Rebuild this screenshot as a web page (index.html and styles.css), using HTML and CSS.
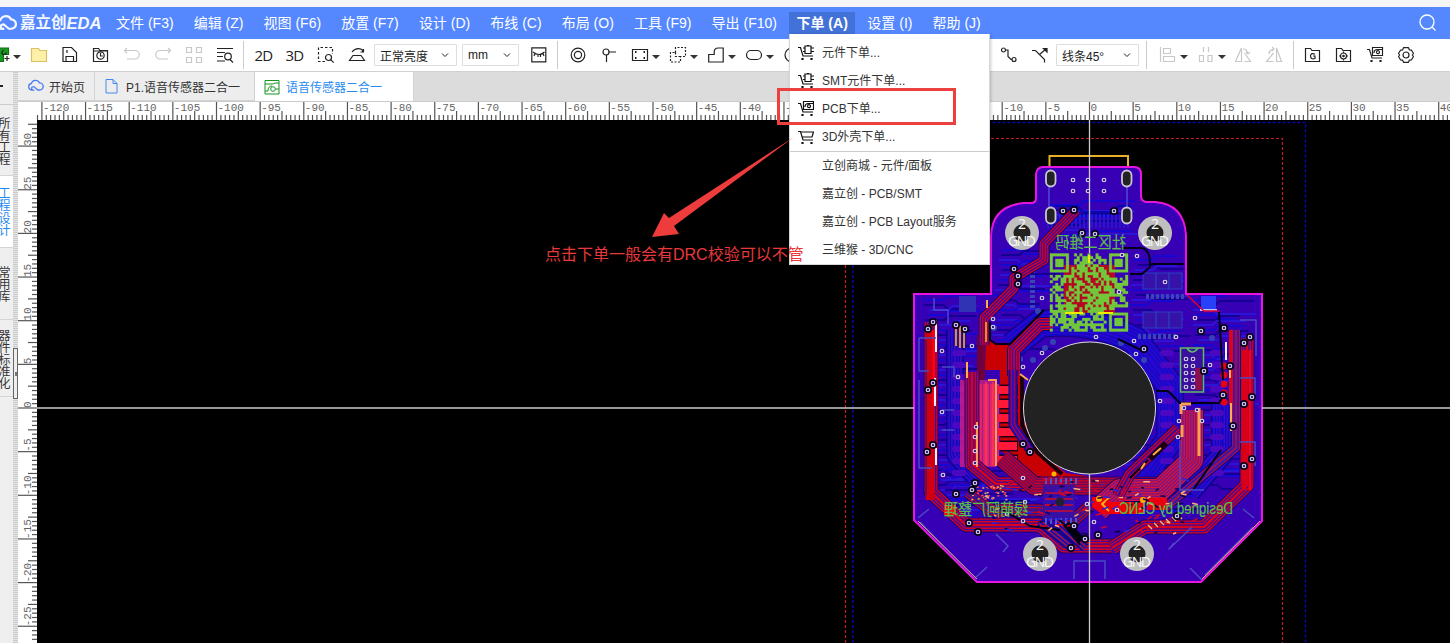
FILE: index.html
```html
<!DOCTYPE html>
<html lang="zh-CN">
<head>
<meta charset="utf-8">
<title>嘉立创EDA</title>
<link rel="stylesheet" href="styles.css">
</head>
<body>
<svg class="defs" width="0" height="0">
  <defs>
    <g id="cart"><path d="M0 2.500h2.500L5 11h10M4 13.500h1v1h-1zM13 13.500h1v1h-1z"/></g>
    <g id="chipcart"><use href="#cart"/><path d="M7 1h6v7.500H7zM9 0h2M5 3h2M5 6.500h2M13 3h3M13 6.500h3"/></g>
    <g id="pcbcart"><use href="#cart"/><path d="M5.500.500h10v8h-10zM7 6q0-3.500 3.500-3.500H15M12.500 5.200a1.500 1.500 0 1 1-3 0 1.500 1.500 0 1 1 3 0"/></g>
    <g id="folderline"><path d="M.5 1.500h5l1.500 2h7.500v11h-14z"/></g>
    <g id="cloud"><path d="M5 12.500H4.200a3.700 3.700 0 0 1-.5-7.300A5 5 0 0 1 13 4.500a4 4 0 0 1 .2 8H11L7.500 9.500a1.900 1.900 0 1 0-.5 2.800"/></g>
  </defs>
</svg>
<div class="app">
  <div class="strip"></div>
  <header class="menubar">
    <div class="brand"><svg class="brand-cloud" viewBox="0 0 18 16"><use href="#cloud"/></svg><span class="brand-cn">嘉立创</span><span class="brand-en">EDA</span></div>
    <nav class="menus">
      <span>文件 (F3)</span><span>编辑 (Z)</span><span>视图 (F6)</span><span>放置 (F7)</span><span>设计 (D)</span><span>布线 (C)</span><span>布局 (O)</span><span>工具 (F9)</span><span>导出 (F10)</span><span class="open">下单 (A)</span><span>设置 (I)</span><span>帮助 (J)</span>
    </nav>
    <svg class="search" viewBox="0 0 18 18"><circle cx="8" cy="8" r="7"/><path d="M13 13l3.500 3.500"/></svg>
  </header>
  <div class="toolbar">
    <div class="tool pair first"><svg viewBox="0 0 16 16"><path class="green" d="M0 1h15.500v6.500h-5v7H0z"/><path d="M11 3.500a2 2 0 1 0 2 2M14 9v5M11.500 11.500h5"/></svg><i class="caret"></i></div>
    <div class="tool"><svg viewBox="0 0 16 16"><path class="yellow" d="M.5 1.500h7l1.500 2h6.500v11h-15z"/></svg></div>
    <div class="tool"><svg viewBox="0 0 16 16"><path d="M1 .500h8.500l5 5v9h-13.500zM4 14.500v-5h7.500v5M5 3v3"/></svg></div>
    <div class="tool"><svg viewBox="0 0 16 16"><path d="M.5 1.500h5l1.500 2h7.500v11h-14zM.5 4h14"/><circle cx="7.500" cy="8.500" r="3.700"/><path d="M7.500 6v3h2.300"/></svg></div>
    <div class="tool dim"><svg viewBox="0 0 16 16"><path d="M3 1L.5 3.500 3 6M1 3.500h10a4 4 0 0 1 0 8.500H3"/></svg></div>
    <div class="tool dim"><svg viewBox="0 0 16 16"><path d="M13 1l2.500 2.500L13 6M15 3.500H5A4 4 0 0 0 5 12h8"/></svg></div>
    <div class="tool dim"><svg viewBox="0 0 16 16"><path d="M.5.500h5v5h-5zM10.500.500h5v5h-5zM.5 10.500h5v5h-5zM10.500 10.500h5v5h-5z"/></svg></div>
    <div class="tool"><svg viewBox="0 0 16 16"><path d="M0 1.500h16M0 5.500h8M0 9.500h6M0 14h8M13 12.500l3 3"/><circle cx="11" cy="9.500" r="3.300"/></svg></div>
    <i class="sep"></i>
    <div class="tool word">2D</div>
    <div class="tool word">3D</div>
    <div class="tool"><svg viewBox="0 0 16 16"><path stroke-dasharray="2.500 2" d="M7 14.500H.500V.500h14V7"/><circle cx="10.500" cy="10.500" r="3"/><path d="M12.700 12.700l3 3"/></svg></div>
    <div class="tool"><svg viewBox="0 0 16 16"><path d="M4 8.500h8l3.500 5H.500zM3 5q4-5 10-2.500l1 2.500M14.500 2v3h-3"/></svg></div>
    <div class="select wide">正常亮度<svg viewBox="0 0 8 5"><path d="M1 .500l3 3 3-3"/></svg></div>
    <div class="select">mm<svg viewBox="0 0 8 5"><path d="M1 .500l3 3 3-3"/></svg></div>
    <div class="tool"><svg viewBox="0 0 16 16"><path d="M.8.800h14v14h-14z"/><path d="M2 5q6 5 11.500 0M4 6.500L3 9M7 7.500V10M9.500 7.500V10M12 6.500l1 2.500"/></svg></div>
    <i class="sep"></i>
    <div class="tool"><svg viewBox="0 0 16 16"><circle cx="8" cy="8" r="6.800"/><circle cx="8" cy="8" r="3.600"/></svg></div>
    <div class="tool"><svg viewBox="0 0 16 16"><circle cx="5" cy="5" r="3"/><path d="M8 5h7M5.500 8v7"/></svg></div>
    <div class="tool pair"><svg viewBox="0 0 16 16"><path d="M.5 2.500h15v11H.500z"/><path d="M3 5h1.500M11.500 5H13M3 11h1.500M11.500 11H13" stroke-width="2"/></svg><i class="caret"></i></div>
    <div class="tool pair"><svg viewBox="0 0 16 16"><path stroke-dasharray="2 1.500" d="M5.500 5.500v-5h10v9h-5v5.500H.500v-9.500zM5.500 5.500v4h5"/></svg><i class="caret"></i></div>
    <div class="tool pair"><svg viewBox="0 0 16 16"><path d="M.7 15V7.500h5.500V5q0-4 4-4h5v14z"/></svg><i class="caret"></i></div>
    <div class="tool pair"><svg viewBox="0 0 16 16"><rect x=".5" y="3.500" width="15" height="9" rx="4.500"/></svg><i class="caret"></i></div>
    <div class="tool"><svg viewBox="0 0 16 16"><circle cx="8" cy="8" r="7"/></svg></div>
    <i class="spring"></i>
    <div class="tool"><svg viewBox="0 0 16 16"><circle cx="2.500" cy="3" r="2"/><circle cx="13" cy="12.500" r="2"/><path d="M4.500 3H7v6.500l3 3h1"/></svg></div>
    <div class="tool"><svg viewBox="0 0 16 16"><path d="M0 3.500h3.500l9 9v3M7.500 7.500l7-6"/><path d="M11.500 1.500h3.500v3.500z" fill="currentColor"/></svg></div>
    <div class="select wide">线条45°<svg viewBox="0 0 8 5"><path d="M1 .500l3 3 3-3"/></svg></div>
    <i class="sep late"></i>
    <div class="tool pair dim"><svg viewBox="0 0 16 16"><path d="M.5 0v15M3.500 1.500h7v5h-7zM3.500 9.500h11v5h-11z"/></svg><i class="caret"></i></div>
    <div class="tool pair dim"><svg viewBox="0 0 16 16"><path d="M1.500 8.500h4v6h-4zM10 8.500h4v6h-4zM5.500 0v5M10.500 0v5"/></svg><i class="caret"></i></div>
    <div class="tool dim"><svg viewBox="0 0 16 16"><path d="M6.500 1v13.500H.500zM9.500 6l6 8.500h-6M8 2q4 0 5 5M11 5l2 2 2-2"/></svg></div>
    <div class="tool dim"><svg viewBox="0 0 16 16"><path d="M10.500 1v13.500h5zM7.500 6l-7 8.500h7M3 7q0-4 5-5M6 0l2 2-2 2"/></svg></div>
    <i class="sep"></i>
    <div class="tool"><svg viewBox="0 0 16 16"><use href="#folderline"/><path d="M10 7.300q-4-2-4.500 1.500 0 4 4.500 2.700V9H8"/></svg></div>
    <div class="tool"><svg viewBox="0 0 16 16"><use href="#folderline"/><circle cx="7.500" cy="9" r="3"/><circle cx="7.500" cy="9" r=".7"/><path d="M7.500 4.500V6M7.500 12v1.500M3 9h1.500M10.500 9H12"/></svg></div>
    <div class="tool"><svg viewBox="0 0 16 16"><use href="#pcbcart"/></svg></div>
    <div class="tool"><svg viewBox="0 0 16 16"><path d="M5.500.700h5l.8 2.100 2.200.4 2 3.300L14.300 8l1.200 1.500-2 3.300-2.200.4-.8 2.100h-5l-.8-2.100-2.200-.4-2-3.300L1.700 8 .500 6.500l2-3.300 2.200-.4z" stroke-linejoin="round"/><circle cx="8" cy="8" r="3"/></svg></div>
  </div>
  <div class="work">
    <aside class="side">
      <div class="side-top"></div>
      <div class="vtab t1">所有工程</div>
      <div class="vtab t2 on">工程设计</div>
      <div class="vtab t3">常用库</div>
      <div class="vtab t4">器件标准化</div>
    </aside>
    <div class="grip"><div class="handle"></div></div>
    <main class="main">
      <div class="tabs">
        <div class="tab home"><svg viewBox="0 0 18 16"><use href="#cloud"/></svg>开始页</div>
        <div class="tab sheet"><svg viewBox="0 0 16 16"><path d="M2 1.500h7l4 4v9.500H2zM9 1.500v4h4"/></svg>P1.语音传感器二合一</div>
        <div class="tab pcb"><svg viewBox="0 0 16 16"><path d="M1 1.500h14v13.500H1zM1 5h8l2-1h4M1 12h3q0-5 4-5M11.500 10h3.500"/><circle cx="9" cy="10" r="2.300"/></svg>语音传感器二合一</div>
      </div>
      <svg class="hruler" id="hruler" viewBox="18 101 1432 19"></svg>
      <div class="stage">
        <svg class="vruler" id="vruler" viewBox="18 120 19 523"></svg>
        <svg class="canvas" id="canvas" viewBox="37 120 1413 523">
          <defs><clipPath id="clip"><path d="M914 294H991V236Q992 206 1024 203H1031Q1036 203 1036 198V174Q1037 167 1043 167H1134Q1141 167 1141 174V197Q1142 202 1147 202H1155Q1184 204 1186 235V294H1262V521L1201 582H977L914 520Z"/></clipPath></defs>
          <g class="bounds"><path class="dash-blue" d="M853 643V122.500H1305.500V643"/><path class="dash-red" d="M845.500 643V138.500H1282.500V643"/></g>
          <g id="board" clip-path="url(#clip)"></g>
          <path class="usb" d="M1049.500 168V156H1128V168"/>
          <path class="edge" d="M914 294H991V236Q992 206 1024 203H1031Q1036 203 1036 198V174Q1037 167 1043 167H1134Q1141 167 1141 174V197Q1142 202 1147 202H1155Q1184 204 1186 235V294H1262V521L1201 582H977L914 520Z"/>
          <path class="bevel" d="M918 521L977 579M1202 579L1260 521"/>
          <path class="axis" d="M37 408H914M1262 408H1450M1089.500 120V253M1089.500 474V643"/>
          <circle class="hole" cx="1089.500" cy="408" r="66"/>
          <g id="silk"></g>
        </svg>
      </div>
    </main>
  </div>
</div>
<div class="dropdown">
  <div class="row"><svg viewBox="0 0 16 16"><use href="#chipcart"/></svg>元件下单...</div>
  <div class="row"><svg viewBox="0 0 16 16"><use href="#chipcart"/></svg>SMT元件下单...</div>
  <div class="row"><svg viewBox="0 0 16 16"><use href="#pcbcart"/></svg>PCB下单...</div>
  <div class="row"><svg viewBox="0 0 16 16"><use href="#cart"/><path d="M2.500 3H15.500L14 8H4"/></svg>3D外壳下单...</div>
  <div class="rule"></div>
  <div class="row plain">立创商城 - 元件/面板</div>
  <div class="row plain">嘉立创 - PCB/SMT</div>
  <div class="row plain">嘉立创 - PCB Layout服务</div>
  <div class="row plain">三维猴 - 3D/CNC</div>
</div>
<div class="mark"></div>
<svg class="arrow" viewBox="640 130 160 115"><path d="M794 138L669 219 664 214 652 238 679 235 674 227Z"/></svg>
<div class="note">点击下单一般会有DRC校验可以不管</div>
<script src="app.js"></script>
</body>
</html>
```
FILE: styles.css
```css
* { box-sizing: border-box; }
body { margin: 0; overflow: hidden; font: 12px "Liberation Sans", "Noto Sans CJK SC", sans-serif; color: #333; }
.defs { position: absolute; }
svg { fill: none; stroke: currentColor; flex: none; display: block; }
.app { width: 1450px; height: 643px; display: flex; flex-direction: column; overflow: hidden; }
.strip { height: 7px; background: #f5f5f5; flex: none; }
.menubar { height: 32px; flex: none; background: #5588ff; color: #fff; display: flex; align-items: center; }
.brand { width: 106px; flex: none; display: flex; align-items: center; white-space: nowrap; color: #f5f8ff; }
.brand-cloud { width: 21px; height: 19px; margin-left: -4px; stroke-width: 1.9; }
.brand-cn { font-size: 15.500px; font-weight: 700; margin-left: 3px; line-height: 20px; }
.brand-en { font-size: 16.500px; font-weight: 700; font-style: italic; line-height: 20px; }
.menus { display: flex; font-size: 14px; line-height: 22px; white-space: nowrap; flex: 1; }
.menus span { padding: 0 10.050px; }
.menus .open { background: #4272d7; font-weight: 700; padding: 0 7.500px; margin: 0 2px 0 2px; }
.search { width: 18px; height: 18px; margin-right: 13px; stroke-width: 1.300; }
.toolbar { height: 33px; flex: none; background: #fff; border-bottom: 1px solid #d0d0d0; display: flex; align-items: center; color: #222; }
.tool { width: 31px; flex: none; display: flex; justify-content: center; align-items: center; }
.tool svg { width: 16px; height: 16px; stroke-width: 1.200; overflow: visible; }
.pair { width: 38px; justify-content: flex-start; padding-left: 8px; gap: 4px; }
.pair.first { margin-left: -15px; }
.dim svg { color: #c8c8c8; }
.word { font: 15px "Open Sans", "Noto Sans", sans-serif; letter-spacing: -.8px; }
.caret { border: 4px solid transparent; border-top: 4px solid #333; border-bottom: 0; margin-top: 3px; }
.green { fill: #169b20; stroke: #146b18; }
.yellow { fill: #fff0a8; stroke: #d8c268; }
.sep { width: 1px; height: 28px; background: #ccc; margin: 0 4px 0 3px; flex: none; }
.sep.late { margin-left: 7px; margin-right: 4.500px; }
.spring { width: 186px; flex: none; }
.select { width: 57px; height: 22px; border: 1px solid #ddd; padding: 0 7px 0 5px; margin-right: 4px; flex: none; display: flex; align-items: center; justify-content: space-between; white-space: nowrap; border-radius: 1px; }
.select.wide { width: 83px; margin-left: 2px; margin-right: 5px; }
.spring ~ .select.wide { margin-left: 1px; margin-right: 0; }
.select svg { width: 8px; height: 5px; }
.work { display: flex; flex: 1; min-height: 0; }
.side { width: 13px; flex: none; background: #efefef; overflow: hidden; }
.side-top { height: 33px; border-bottom: 1px solid #ccc; background: linear-gradient(#222, #222) 0 13px / 3px 2px no-repeat #efefef; }
.vtab { width: 16px; margin-left: -3px; padding-right: 4px; border-bottom: 1px solid #d5d5d5; font-size: 12px; line-height: 12px; overflow: hidden; writing-mode: vertical-rl; display: flex; align-items: center; justify-content: flex-start; }
.t1 { height: 71px; padding-top: 12px; }
.t2 { height: 72px; padding-top: 11px; letter-spacing: .5px; }
.t3 { height: 72px; padding-top: 18px; }
.t4 { height: 77px; padding-top: 9px; }
.on { background: #fff; color: #1e88f0; }
.grip { width: 5px; flex: none; background: repeating-linear-gradient(#ccc 0 1px, #e4e4e4 1px 2px); padding-top: 276px; }
.handle { width: 5px; height: 51px; border: 1px solid #666; background: linear-gradient(#777, #777) 1px 23px / 2px 4px no-repeat #eee; }
.main { flex: 1; min-width: 0; display: flex; flex-direction: column; }
.tabs { height: 29px; flex: none; background: #dcdcdc; display: flex; }
.tab { display: flex; align-items: center; white-space: nowrap; background: #ededed; border-right: 1px solid #d2d2d2; border-bottom: 1px solid #d2d2d2; }
.tab svg { width: 16px; height: 16px; }
.home { width: 77px; padding-left: 10px; gap: 5px; }
.home svg { color: #4c7df0; stroke-width: 1.500; }
.sheet { width: 160px; padding-left: 9px; gap: 6px; }
.sheet svg { color: #4488ee; }
.pcb { width: 159px; background: #fff; color: #2a8cf0; padding-left: 9px; gap: 6px; border-bottom: 0; }
.pcb svg { color: #159520; }
.hruler { width: 1432px; height: 19px; background: #fff; }
.stage { flex: 1; display: flex; min-height: 0; }
.vruler { width: 19px; height: 523px; background: #fff; }
.canvas { width: 1413px; height: 523px; background: #000; }
.tick { stroke: #555; stroke-width: 1.200; }
.num { font: 11px "Liberation Mono", monospace; fill: #666; stroke: none; }
.dash-blue { stroke: #0808a8; stroke-width: 1.500; stroke-dasharray: 3 2; }
.dash-red { stroke: #c81a1a; stroke-width: 1.200; stroke-dasharray: 3 2; }
.usb { stroke: #e8b028; stroke-width: 2; }
.edge { stroke: #e815e0; stroke-width: 2; }
.bevel { stroke: #e0a070; stroke-width: 1; }
.axis { stroke: #ccc; stroke-width: 1.300; }
.hole { fill: #222; stroke: #ddd; stroke-width: 1; }
.gnd { font: 14px "Noto Sans", sans-serif; fill: #f6f6f6; stroke: none; text-anchor: middle; }
.silk-text { fill: #58bd4c; stroke: #58bd4c; stroke-width: .2; font-family: "Liberation Sans", "Noto Sans CJK SC", sans-serif; }
.dropdown { position: absolute; left: 789px; top: 34px; width: 201px; height: 231px; background: #fff; border: 1px solid #d6d6d6; border-top: 0; padding-top: 4px; box-shadow: 1px 1px 3px rgba(0,0,0,.2); font-size: 12px; }
.row { height: 28px; display: flex; align-items: center; padding: 0 0 2px 8px; gap: 8px; white-space: nowrap; }
.row svg { width: 16px; height: 16px; color: #111; stroke-width: 1.200; margin-top: 3px; }
.plain { padding-left: 32px; padding-bottom: 3px; }
.rule { height: 1px; background: #ccc; margin-top: 1px; }
.mark { position: absolute; left: 777px; top: 88px; width: 179px; height: 37px; border: 3px solid #ec4040; }
.arrow { position: absolute; left: 640px; top: 129px; width: 160px; height: 115px; fill: #ee3c3c; stroke: none; }
.note { position: absolute; left: 545px; top: 244px; font-size: 16px; line-height: 22px; color: #e9383b; white-space: nowrap; }
```
FILE: app.js
```js
const NS = 'http://www.w3.org/2000/svg';
function add(parent, tag, attrs, text) {
  const el = document.createElementNS(NS, tag);
  for (const k in attrs) el.setAttribute(k, attrs[k]);
  if (text !== undefined) el.textContent = text;
  parent.appendChild(el);
  return el;
}
const STEP = 8.73, OX = 1089.5, OY = 408;
const h = document.getElementById('hruler'), v = document.getElementById('vruler');
add(h, 'path', { d: 'M18 101.500H1450', stroke: '#ccc' });
for (let i = -242; i <= 84; i++) {
  const x = OX + i * STEP / 2;
  if (x < 37) continue;
  const len = i % 10 === 0 ? 18 : i % 5 === 0 ? 9 : 5;
  add(h, 'path', { class: 'tick', d: `M${x} 120v-${len}` });
  if (i % 10 === 0) add(h, 'text', { class: 'num', x: x + 1, y: 111 }, i / 2);
}
for (let i = -66; i <= 54; i++) {
  const y = OY + i * STEP / 2;
  if (y < 121) continue;
  const len = i % 10 === 0 ? 19 : i % 5 === 0 ? 9 : 5;
  add(v, 'path', { class: 'tick', d: `M37 ${y}h-${len}` });
  if (i % 10 === 0) add(v, 'text', { class: 'num', transform: `translate(31 ${y}) rotate(-90)` }, i === 0 ? 0 : -i / 2);
}

const b = document.getElementById('board'), s = document.getElementById('silk');
let seed = 11;
const rnd = () => (seed = (seed * 16807) % 2147483647) / 2147483647;
const line = (d, c, w = 1) => add(b, 'path', { d, stroke: c, 'stroke-width': w, 'stroke-linejoin': 'round' });
const box = (x, y, w, hh, c, o = 1) => add(b, 'rect', { x, y, width: w, height: hh, fill: c, stroke: 'none', opacity: o });
// Nested strokes of shrinking width give a bundle of parallel traces.
function bundle(d, w, a = '#d8001c', g = '#3a0a9c', gap = 2.600) {
  let c = 0;
  line(d, '#180078', w + 2);
  for (let k = w; k > 0; k -= gap) line(d, c++ % 2 ? g : a, k);
}
box(910, 160, 360, 430, '#3800b4');

// Blue layer
[[924, 300, 64, 200], [1190, 300, 66, 190], [992, 250, 62, 100], [1128, 260, 60, 130], [1040, 205, 100, 35], [1120, 440, 90, 80], [940, 470, 110, 50]].forEach(r => {
  for (let i = 0; i < r[3] / 5; i++) {
    const y = r[1] + i * 5, x = r[0] + rnd() * 10;
    line(`M${x} ${y}h${r[2] * .3}l4 ${rnd() > .5 ? 4 : -4}h${r[2] * (.2 + rnd() * .4)}`, ['#1608d0', '#150094', '#2a14d8'][i % 3], 2);
  }
});
bundle('M1012 346L1040 324Q1090 318 1135 340L1170 385V440L1135 485', 26, '#1408c8', '#2c08cc', 3.200);
bundle('M955 330V455L975 478', 16, '#1006b8', '#3a0cc4', 2.800);
bundle('M1222 400V455L1190 492', 20, '#1006c8', '#3a0cc4', 2.800);
for (let i = 0; i < 21; i++) line(`M${1048 + i * 4} 214v14`, '#2020dc', 1.500);
line('M1055 206h22l6 6h30l6-6h12', '#0808b0', 2);
[[1143, 273], [1143, 312]].forEach(p => { for (let k = 0; k < 3; k++) add(b, 'rect', { x: p[0] + k * 13, y: p[1], width: 13, height: 16, fill: '#3712a9', stroke: '#2940bd' }); });
for (let i = 0; i < 8; i++) { box(1146 + i * 5, 294, 3, 5, '#3a46b5'); box(1138 + i * 5, 334, 3, 5, '#3a46b5'); box(1030, 270 + i * 5, 5, 3, '#3a46b5'); }
for (let i = 0; i < 11; i++) for (const x of [952, 1160, 1210]) add(b, 'rect', { x, y: 350 + i * 12, width: 14, height: 6, rx: 3, fill: '#4c08c0', stroke: 'none' });
[[1020,359],[1033,360],[1045,348],[1053,342],[1121,343],[1144,360],[994,328],[1212,338],[1038,311],[1129,357]].forEach(p => add(b, 'circle', { cx: p[0], cy: p[1], r: 3, fill: '#3442b4', stroke: 'none' }));
box(959, 296, 17, 16, '#3033b4'); box(1201, 296, 15, 14, '#2840f8');
line('M1200 310h17', '#eef', 1.500);
line('M1186 294l18 17h15', '#e00030', 1.500);

// Red copper pours and traces
add(b, 'path', { d: 'M986 335L992 343H1010L1013 368 1023 378V420L1040 452 1066 473 1100 478V486H1050L1000 450V370H985Z', fill: '#c80004', stroke: 'none' });
line('M1022 376V425L1037 452 1062 474', '#1c0010', 4);
add(b, 'rect', { x: 977, y: 335, width: 8, height: 45, fill: '#70003c', stroke: 'none' });
box(960, 380, 36, 87, '#c81c8c', .85); box(975, 384, 24, 82, '#f02868', .85);
for (let i = 0; i < 8; i++) line(`M${972 + i * 3.500} 382V466`, i % 2 ? '#a02078' : '#ff3a50', 1.300);
for (let i = 0; i < 6; i++) { line(`M1000 ${390 + i * 14}h18`, '#200018', 11); line(`M998 ${390 + i * 14}h19`, '#ff1838', 8); }
bundle('M1076 210L1044 244V260L1014 278V288L984 318V345', 9);
bundle('M1053 324H1040L1014 350V376', 12);
bundle('M931 322V492L966 525H1040L1064 546H1112', 13);
bundle('M1247 338V485L1204 527H1145L1112 548', 13);
bundle('M972 372V464L996 484H1040', 13);
bundle('M1013 370V425L1030 450', 7, '#2210c8', '#b00030');
bundle('M1002 458L1034 486H1172', 17, '#c00028', '#6a0a60');
bundle('M1192 410V460L1160 490H1120L1098 510', 22, '#d4143c', '#7a1484');
bundle('M1178 428L1130 474L1118 496', 10);
bundle('M1236 330V448L1200 478L1165 508', 8, '#a01050', '#1818c8');
bundle('M1090 506L1074 520L1040 510H990L968 492', 11, '#c00020', '#1818b0');
bundle('M1040 522L1072 548M1056 522L1085 548', 7, '#1010b8', '#c01030');
add(b, 'path', { d: 'M1092 497h14l4 5h34v12h-42l-10-7z', fill: '#f00008', stroke: 'none' });
box(1147, 498, 20, 12, '#e80010');
line('M1231 330V405', '#e00018', 4);
for (let i = 0; i < 5; i++) add(b, 'circle', { cx: 1224, cy: 366 + i * 9, r: 3.500, fill: '#e80010', stroke: 'none' });
line('M1244 350V490', '#d80018', 5); line('M1250 350V490', '#ff0008', 3);
line('M930 330V500', '#d00012', 9); line('M934 330V405', '#ff0010', 3); line('M926 340V495', '#501060', 1.500);
box(944, 505, 12, 10, '#f01010');
box(1043, 485, 32, 35, '#3311aa', .9); line('M1045 493h28M1045 499h28M1045 505h28M1045 511h28', '#a80c48', 2);
for (let i = 0; i < 7; i++) line(`M${1046 + i * 5} 478v6M${1046 + i * 5} 518v6`, '#4d55d5', 2);
add(b, 'circle', { cx: 1060, cy: 502, r: 4.500, fill: '#202038', stroke: 'none' });

// Isolation gaps
['M1118 339L1141 350', 'M1156 391H1168L1180 403H1219L1224 395', 'M1130 274H1142L1150 267Q1151 248 1140 248H1122M1150 264H1184', 'M990 322V340L996 344H1010L1044 310', 'M1060 520L1080 545', 'M1000 508L1030 526 1060 530', 'M1221 450L1193 490', 'M1219 312L1223 380', 'M1130 478L1148 460'].forEach(d => line(d, '#000018', 2));
line('M1066 524L1082 540', '#000010', 7);
line('M1166 443l-16 16', '#1a0010', 6);
line('M936 320V352M936 448V465M1226 342V360M935 378v28', '#f2f2ff', 2);
line('M996 380V466M977 422V467M988 380H997', '#ff9c50', 2);
line('M1181 404H1191M1181 404v10M1182 425v12M1199 408V456', '#ffa050', 3);
line('M956 328v18M960 326v22M964 332v16M986 322v20', '#e8a31c', 1.800);
line('M1230 366v12M1231 403v28M1161 448l-8 7M1145 463l-4 6M967 362v16M987 300v8M1020 374l8 6', '#ffad49', 2);
line('M1109 498l-7 6 7 7', '#ffb020', 2);
add(b, 'circle', { cx: 1099, cy: 499, r: 3, fill: '#ffb000', stroke: 'none' });
add(b, 'circle', { cx: 1143, cy: 500, r: 3, fill: '#ffb000', stroke: 'none' });
add(b, 'circle', { cx: 1054, cy: 474, r: 2.500, fill: '#ffb000', stroke: 'none' });
for (let i = 0; i < 70; i++) box(970 + rnd() * 36, 484 + rnd() * 16, 2, 1.500, ['#e4b45a', '#ff4050', '#1515a0'][i % 3]);
for (let i = 0; i < 130; i++) {
  const x = 985 + rnd() * 210, y = 478 + rnd() * 56;
  line(`M${x} ${y}l${2 + rnd() * 5} ${rnd() * 6 - 3}`, ['#ffb070', '#0c0040', '#e00022', '#2525e0', '#100050', '#d80020'][i % 6], 1.500);
}
for (let i = 0; i < 12; i++) line(`M${1145 + i * 3} ${526 - i}l4 4`, i % 2 ? '#ffb870' : '#c00020', 1.500);
// Bottom silkscreen brackets
line('M919 338h17M919 338v33h10M919 380v88h13M942 367h12v10M942 410h12M942 430h12M918 518l11-9M920 522l54 56M975 578l12-11M996 534l12 12-5 6M1174 543l-5 6 23-22M1190 568l12 12M1254 518l-11-9M1205 575l48-48M1074 579v-18h31v18M1240 320h16v36M1240 378h15v22M1240 442h15v24M1180 440v50h24', '#4a4bc3', 1.500);
line('M1049 176v35M1127 176v35M934 298v12h14v14', '#4b4bd0', 1.500);
add(b, 'rect', { x: 1180.5, y: 348, width: 23, height: 44, fill: '#3a10a0', stroke: '#5fba62', 'stroke-width': 1.500 });
box(1195, 368, 7, 22, '#8a1050');
line('M1187 348q5 8 11 0', '#5fba62', 1.500);

// QR code
box(1064, 265, 51, 48, '#b50720');
const N = 29, M = 78 / N, fx = [[0, 0], [22, 0], [22, 22]];
let qr = '';
for (let y = 0; y < N; y++) for (let x = 0; x < N; x++) {
  let on = rnd() > .42;
  for (const [a, c] of fx) {
    const u = x - a, w = y - c;
    if (u >= -1 && u <= 7 && w >= -1 && w <= 7) {
      const m = Math.max(Math.abs(u - 3), Math.abs(w - 3));
      on = m === 3 || m <= 1;
    }
  }
  if (on) qr += `M${1050 + x * M} ${253.500 + y * M}h${M}v${M}h-${M}z`;
}
add(b, 'path', { d: qr, fill: '#74c83c', stroke: '#74c83c', 'stroke-width': .3 });
line('M1065 313h18M1098 313h15M1089 255v8', '#f2e900', 2);

// Slots, mounting pads, vias
[[1051, 178], [1127, 178], [1051, 215], [1127, 215]].forEach(p => add(s, 'rect', { x: p[0] - 5, y: p[1] - 7.500, width: 9.500, height: 16, rx: 4.700, fill: '#222', stroke: '#c8c4d4', 'stroke-width': 1.800 }));
[[1022, 233], [1155, 233], [1040, 554], [1137, 554]].forEach(p => {
  add(s, 'circle', { cx: p[0], cy: p[1], r: 17, fill: '#bfbfbf', stroke: 'none' });
  add(s, 'circle', { cx: p[0], cy: p[1], r: 8.500, fill: '#222', stroke: 'none' });
  add(s, 'text', { class: 'gnd', x: p[0], y: p[1] - 4 }, '2');
  add(s, 'text', { class: 'gnd', x: p[0], y: p[1] + 13, textLength: 28 }, 'GND');
});
const via = (x, y, dark) => {
  if (dark) add(s, 'circle', { cx: x, cy: y, r: 4, fill: '#080018', stroke: 'none' });
  add(s, 'circle', { cx: x, cy: y, r: 1.800, fill: '#302080', stroke: '#e0d8f0', 'stroke-width': 1.100 });
};
[[1073,180],[1088,180],[1104,180],[1073,191],[1088,191],[1104,191],[1042,298],[993,319],[993,327],[972,346],[942,351],[1042,353],[1023,367],[958,377],[942,412],[943,475],[1023,478],[1023,521],[1165,282],[1137,256],[1122,255],[1195,318],[1176,337],[1134,341],[1136,354],[1096,337],[1210,365],[1160,401],[976,427],[975,437],[975,451],[975,463],[1184,408],[1197,410],[1179,421],[1202,421],[1178,437],[1094,522],[1117,510],[1087,504],[1025,502],[1007,514],[1119,292]].forEach(p => via(p[0], p[1]));
[[1063,211],[1074,210],[1114,211],[1014,269],[1018,276],[1018,284],[933,322],[928,329],[956,325],[965,329],[1144,349],[1201,331],[1224,328],[1250,337],[1244,343],[933,383],[928,390],[933,445],[927,452],[1030,452],[1023,444],[975,483],[972,490],[956,494],[969,523],[978,532],[1074,526],[1071,548],[1085,539],[1098,535],[1204,371],[1223,395],[1233,426],[1252,397],[1244,404],[1252,459],[1244,466],[1230,366],[1177,516],[1082,233],[1095,234]].forEach(p => via(p[0], p[1], true));
for (let r = 0; r < 5; r++) { via(1186, 359 + r * 7); via(1193, 359 + r * 7); }
const mirror = (x, y, size, w, t, sy = 1) => add(s, 'text', { class: 'silk-text', transform: `translate(${x} ${y}) scale(-1 ${sy})`, 'font-size': size, textLength: w, lengthAdjust: 'spacingAndGlyphs' }, t);
mirror(1126, 248, 14, 71, '社区二维码', 1.100);
mirror(1028, 515, 14, 84, '绿萌阿厂整理', 1.150);
mirror(1233, 514, 14.500, 114, 'Designed by CLNC', 1.150);
```
